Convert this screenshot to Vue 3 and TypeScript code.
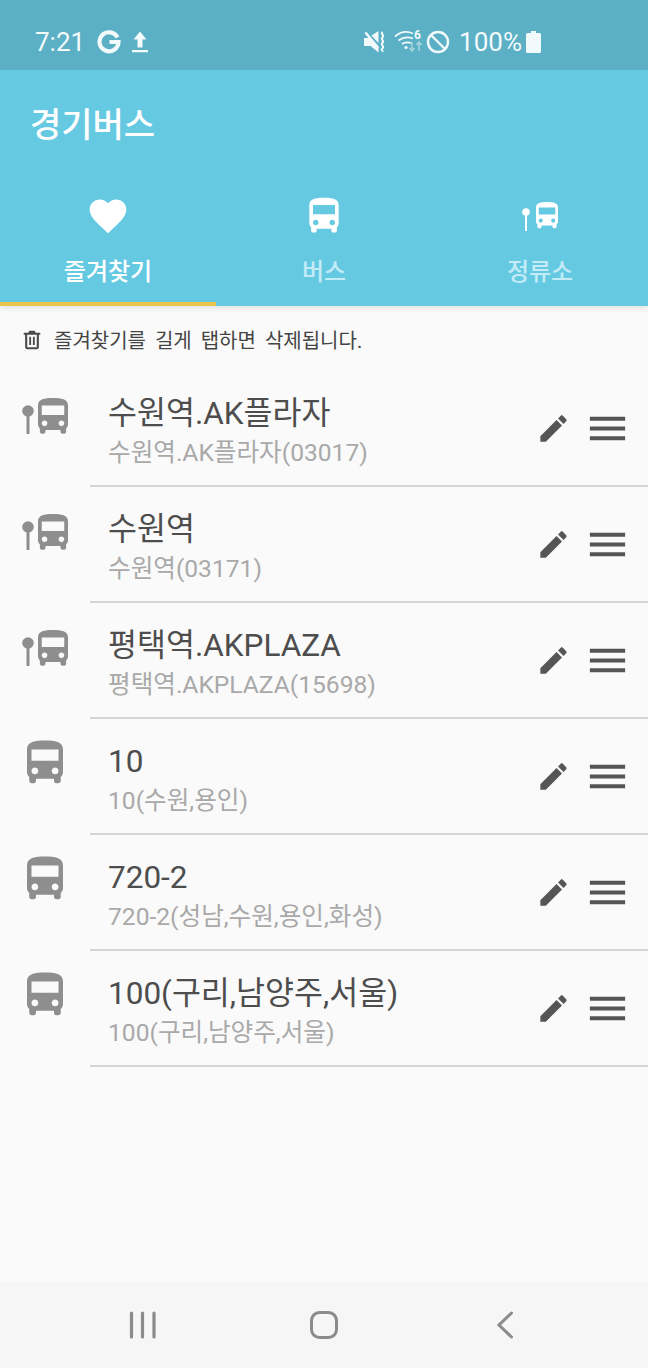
<script setup lang="ts">
interface Favorite {
  id: number
  kind: 'stop' | 'bus'
  title: string
  sub: string
}

const busPath =
  'M4 16c0 .88.39 1.67 1 2.22V20c0 .55.45 1 1 1h1c.55 0 1-.45 1-1v-1h8v1c0 .55.45 1 1 1h1c.55 0 1-.45 1-1v-1.78c.61-.55 1-1.34 1-2.22V6c0-3.5-3.58-4-8-4s-8 .5-8 4v10zm3.5 1c-.83 0-1.5-.67-1.5-1.5S6.67 14 7.5 14s1.5.67 1.5 1.5S8.33 17 7.5 17zm9 0c-.83 0-1.5-.67-1.5-1.5s.67-1.5 1.5-1.5 1.5.67 1.5 1.5-.67 1.5-1.5 1.5zm1.5-6H6V6h12v5z'

const favorites: Favorite[] = [
  { id: 1, kind: 'stop', title: '수원역.AK플라자', sub: '수원역.AK플라자(03017)' },
  { id: 2, kind: 'stop', title: '수원역', sub: '수원역(03171)' },
  { id: 3, kind: 'stop', title: '평택역.AKPLAZA', sub: '평택역.AKPLAZA(15698)' },
  { id: 4, kind: 'bus', title: '10', sub: '10(수원,용인)' },
  { id: 5, kind: 'bus', title: '720-2', sub: '720-2(성남,수원,용인,화성)' },
  { id: 6, kind: 'bus', title: '100(구리,남양주,서울)', sub: '100(구리,남양주,서울)' }
]
</script>

<template>
  <div class="screen">
    <header class="appbar">
      <div class="status">
        <span class="clock">7:21</span>
        <svg viewBox="0 0 24 24" width="24" height="24">
          <path d="M20.500 7.500A9.500 9.500 0 1 0 21.500 12H12.500" fill="none" stroke="#f2fafc" stroke-width="4.200" />
        </svg>
        <svg class="st-up" viewBox="0 0 18 24" width="18" height="24">
          <path d="M9 1.500l6.500 8h-4v8h-5v-8h-4z M1 20h16v2.200H1z" fill="#f2fafc" />
        </svg>
        <span class="spacer"></span>
        <svg viewBox="0 0 22 22" width="22" height="22">
          <path d="M0 7h4.500l1-.6L14.500 16v5.500L6.500 15H0z M7.500 4.500L14.500 0v12z M.5 2.200l1.800-1.500 13 15.500-1.800 1.500z" fill="#f2fafc" />
          <path d="M18.500 1c-2.400 2 2.400 3.400 0 5.400s2.400 3.400 0 5.400 2.400 3.400 0 5.400 1 2.600 0 3.600" fill="none" stroke="#f2fafc" stroke-width="2" />
        </svg>
        <svg class="st-wifi" viewBox="0 0 30 26" width="30" height="26">
          <path d="M1 7.500C6 3 13 2 19 4.500 M4.500 11.500C9 8 14 7.500 19 9.500 M8 15c3-2 6-2 9-1" fill="none" stroke="#f2fafc" stroke-width="1.800" />
          <circle cx="12" cy="18.500" r="1.600" fill="#f2fafc" />
          <text x="20" y="10" class="wifi-six">6</text>
          <path d="M18 13v8M15.500 19l2.500 3 2.500-3" fill="none" stroke="#a3d3df" stroke-width="1.600" />
          <path d="M25 22v-8M22.500 16l2.500-3 2.500 3" fill="none" stroke="#a3d3df" stroke-width="1.600" />
        </svg>
        <svg class="st-block" viewBox="0 0 24 24" width="24" height="24">
          <circle cx="12" cy="12" r="10" fill="none" stroke="#f2fafc" stroke-width="2.400" />
          <path d="M5 5l14 14" stroke="#f2fafc" stroke-width="2.400" />
        </svg>
        <span class="battery-text">100%</span>
        <svg class="st-battery" viewBox="0 0 15 22" width="15" height="22">
          <path d="M5 0h5v2h3.500A1.500 1.500 0 0 1 15 3.500V20.500A1.500 1.500 0 0 1 13.500 22H1.500A1.500 1.500 0 0 1 0 20.500V3.500A1.500 1.500 0 0 1 1.500 2H5z" fill="#f2fafc" />
        </svg>
      </div>
      <h1 class="app-title">경기버스</h1>
      <nav class="tabs">
        <div class="tab active">
          <svg viewBox="0 0 24 24" width="44" height="44">
            <path
              fill="#fff"
              d="M12 21.350l-1.450-1.320C5.400 15.360 2 12.280 2 8.500 2 5.420 4.420 3 7.500 3c1.740 0 3.410.81 4.500 2.090C13.090 3.810 14.760 3 16.500 3 19.580 3 22 5.420 22 8.500c0 3.780-3.400 6.860-8.550 11.540L12 21.350z"
            />
          </svg>
          <span>즐겨찾기</span>
        </div>
        <div class="tab">
          <svg viewBox="0 0 24 24" width="44" height="44"><path fill="#fff" :d="busPath" /></svg>
          <span>버스</span>
        </div>
        <div class="tab">
          <svg viewBox="0 0 44 44" width="44" height="44">
            <circle cx="8" cy="18" r="3.800" fill="#fff" />
            <rect x="7" y="19" width="2" height="18" fill="#fff" />
            <svg x="12.500" y="5.250" width="33" height="33" viewBox="0 0 24 24"><path fill="#fff" :d="busPath" /></svg>
          </svg>
          <span>정류소</span>
        </div>
      </nav>
    </header>

    <div class="notice">
      <svg viewBox="0 0 24 24" width="22" height="22">
        <path
          fill="#4a4a4a"
          d="M9 2h6l1 2h5v2.200h-1.500V20a2 2 0 0 1-2 2H6.500a2 2 0 0 1-2-2V6.200H3V4h5zM6.800 6.200V19.800h10.400V6.200zM9 8.500h2v9H9zm4 0h2v9h-2z"
        />
      </svg>
      <span>즐겨찾기를 길게 탭하면 삭제됩니다.</span>
    </div>

    <main class="list">
      <div v-for="item in favorites" :key="item.id" class="row">
        <div class="row-icon">
          <svg v-if="item.kind === 'bus'" viewBox="0 0 24 24" width="54" height="54">
            <path fill="#8e8e8e" :d="busPath" />
          </svg>
          <svg v-else viewBox="0 0 54 54" width="54" height="54">
            <circle cx="10" cy="23" r="5.800" fill="#8e8e8e" />
            <rect x="8.500" y="25" width="3" height="21" fill="#8e8e8e" />
            <svg x="12.500" y="6.250" width="45" height="45" viewBox="0 0 24 24"><path fill="#8e8e8e" :d="busPath" /></svg>
          </svg>
        </div>
        <div class="row-body">
          <div class="row-text">
            <div class="row-title">{{ item.title }}</div>
            <div class="row-sub">{{ item.sub }}</div>
          </div>
          <svg viewBox="0 0 24 24" width="35" height="35">
            <path
              fill="#555"
              d="M3 17.250V21h3.750L17.810 9.940l-3.750-3.750L3 17.250zM20.710 7.040c.39-.39.39-1.020 0-1.410l-2.340-2.340c-.39-.39-1.020-.39-1.410 0l-1.830 1.830 3.750 3.750 1.830-1.830z"
            />
          </svg>
          <svg viewBox="0 0 24 24" width="47" height="47">
            <path fill="#555" d="M3 18h18v-2H3v2zm0-5h18v-2H3v2zm0-7v2h18V6H3z" />
          </svg>
        </div>
      </div>
    </main>

    <footer class="navbar">
      <svg viewBox="0 0 28 28" width="28" height="28">
        <path d="M3.500 2v24M14.500 2v24M26 2v24" stroke="#8b8b8b" stroke-width="3.200" stroke-linecap="round" />
      </svg>
      <svg class="nav-home" viewBox="0 0 30 30" width="30" height="30">
        <rect x="2.500" y="2.500" width="25" height="25" rx="8" fill="none" stroke="#8b8b8b" stroke-width="3" />
      </svg>
      <svg class="nav-back" viewBox="0 0 18 28" width="18" height="28">
        <path d="M15.500 2L3 14l12.500 12" fill="none" stroke="#8b8b8b" stroke-width="3" stroke-linecap="round" />
      </svg>
    </footer>
  </div>
</template>

<style scoped>
.screen {
  width: 648px;
  height: 1368px;
  display: flex;
  flex-direction: column;
  background: #fafafa;
  font-family: Roboto, 'Noto Sans CJK KR', sans-serif;
  overflow: hidden;
}

.appbar {
  background: #65c9e2;
  color: #fff;
  box-shadow: 0 2px 6px rgba(0, 0, 0, 0.1);
  z-index: 1;
}

.status {
  height: 70px;
  background: #5bb0c5;
  display: flex;
  align-items: center;
  padding: 14px 107px 0 35px;
  box-sizing: border-box;
  color: #f2fafc;
}

.clock {
  font-size: 26px;
  width: 62px;
}

.st-up {
  margin-left: 10px;
}

.spacer {
  flex: 1;
}

.st-wifi {
  margin-left: 8px;
}

.st-block {
  margin-left: 2px;
}

.wifi-six {
  font-size: 12px;
  font-weight: 700;
  fill: #f2fafc;
}

.battery-text {
  font-size: 26px;
  margin-left: 9px;
}

.st-battery {
  margin-left: 4px;
}

.app-title {
  margin: 0;
  height: 110px;
  padding: 34px 0 0 30px;
  box-sizing: border-box;
  font-size: 34px;
  line-height: 42px;
  font-weight: 500;
}

.tabs {
  display: grid;
  grid-template-columns: repeat(3, 1fr);
  height: 126px;
}

.tab {
  display: flex;
  flex-direction: column;
  align-items: center;
  box-sizing: border-box;
  height: 126px;
  padding-top: 14px;
  border-bottom: 4px solid transparent;
  font-size: 24px;
  font-weight: 500;
  color: #c4ecf6;
}

.tab span {
  margin-top: 18px;
  line-height: 32px;
}

.tab.active {
  color: #fff;
  border-bottom-color: #eac34a;
}

.notice {
  height: 65px;
  display: flex;
  align-items: center;
  gap: 11px;
  padding: 2px 0 0 21px;
  box-sizing: border-box;
  font-size: 20px;
  word-spacing: 4px;
  color: #444;
}

.list {
  flex: 1;
}

.row {
  height: 116px;
  display: flex;
}

.row-icon {
  width: 90px;
  padding: 17px 0 0 18px;
  box-sizing: border-box;
  flex: none;
}

.row-body {
  flex: 1;
  display: flex;
  align-items: center;
  padding: 0 17px 0 18px;
  border-bottom: 2px solid #d4d4d4;
  box-sizing: border-box;
  gap: 13px;
}

.row-text {
  flex: 1;
  min-width: 0;
  padding-top: 8px;
}

.row-title {
  font-size: 31.500px;
  line-height: 42px;
  color: #4d4d4d;
}

.row-sub {
  font-size: 24.600px;
  line-height: 36px;
  color: #a9a9a9;
}

.navbar {
  height: 86px;
  background: #f6f6f6;
  display: flex;
  align-items: center;
  padding-left: 128px;
  box-sizing: border-box;
}

.nav-home {
  margin-left: 153px;
}

.nav-back {
  margin-left: 157px;
}
</style>
